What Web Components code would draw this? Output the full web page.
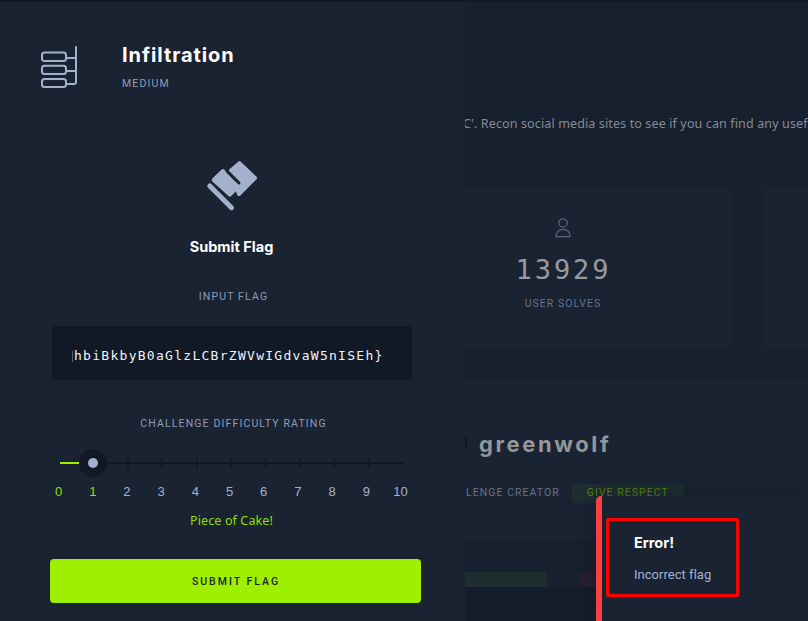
<!DOCTYPE html>
<html lang="en"><head><meta charset="utf-8"><title>Infiltration</title>
<style>
html,body{margin:0;width:808px;height:621px;overflow:hidden;background:#17202e}
body{position:relative;font-family:Inter,"Liberation Sans",sans-serif}
</style></head><body>
<challenge-page></challenge-page>
<flag-drawer></flag-drawer>
<error-toast><span slot="title">Error!</span><span slot="message">Incorrect flag</span></error-toast>
<script>
const define=(name,html,setup)=>customElements.define(name,class extends HTMLElement{
  constructor(){super();this.attachShadow({mode:'open'}).innerHTML=html;if(setup)setup(this.shadowRoot);}
});

define('stat-card',`<style>
:host{display:flex;flex-direction:column;align-items:center;box-sizing:border-box;height:160px;background:#1a2332;border-radius:4px;padding-top:30px}
svg{display:block;width:18px;height:20px}
.n{font:27px/34px "DejaVu Sans Mono",monospace;letter-spacing:2.9px;margin:15px 0 0 1px;color:#969b9f}
.l{font:10.5px/14px Roboto,sans-serif;letter-spacing:1.02px;margin-top:10px;color:#66728a}
</style>
<svg viewBox="0 0 18 21" fill="none" stroke="#59657b" stroke-width="1.3"><circle cx="9" cy="5.2" r="4.4"/><path d="M1.6 19.6C1.6 14.8 4.5 12 9 12s7.4 2.8 7.4 7.6z" stroke-linejoin="round"/></svg>
<div class="n"><slot name="value"></slot></div><div class="l"><slot name="label"></slot></div>`);

define('challenge-page',`<style>
:host{display:flex;flex-direction:column;width:808px;height:621px;overflow:hidden;box-sizing:border-box;border-top:2px solid #111927;background:#17202e}
.bar{height:59px;border-bottom:1px solid #1b2533;flex:none}
.desc{border-bottom:1px solid #1b2533;flex:none;padding:51px 0 0 463px;box-sizing:border-box;height:98px;white-space:nowrap;font:12.5px/22px "Noto Sans",sans-serif;letter-spacing:.13px;color:#858b93}
.stats{height:220px;flex:none;display:grid;grid-template-columns:336px 336px;gap:32px;padding:28px 0 0 395px;box-sizing:border-box}
.creator{flex:1;background:#1a2332;padding:47px 0 0 442px}
.who{display:flex;align-items:center;gap:12px;height:34px}
.av{width:25px;height:25px;margin-top:-6px;border-radius:50%;background:#0c131a}
.name{font:bold 22px/32px Inter,sans-serif;letter-spacing:2.6px;color:#92979c}
.role{display:flex;align-items:center;gap:12px;height:20px;margin:22px 0 0 24px;font:10.5px/14px Roboto,sans-serif;letter-spacing:1.05px;color:#66728a}
.role b{font-weight:400;display:flex;align-items:center;justify-content:center;width:112px;height:19px;border-radius:4px;background:#1e2d30;color:#578211}
.box{background:#17202e;margin:37px 0 0 -42px;height:90px;display:flex;flex-direction:column}
.tabs{display:flex;gap:32px;height:15px;padding-top:32px;flex:none}
.g{width:147px;background:#1e2d30;border-radius:4px 4px 0 0}
.r{width:147px;background:#271f30;border-radius:4px 4px 0 0}
.body{background:#141d2b;flex:1}
</style>
<div class="bar"></div>
<div class="desc">C'. Recon social media sites to see if you can find any usef</div>
<div class="stats"><stat-card><span slot="value">13929</span><span slot="label">USER SOLVES</span></stat-card><stat-card></stat-card></div>
<div class="creator"><div class="who"><i class="av"></i><span class="name">greenwolf</span></div>
<div class="role"><span>LENGE CREATOR</span><b>GIVE RESPECT</b></div>
<div class="box"><div class="tabs"><i class="g"></i><i class="r"></i></div><div class="body"></div></div></div>`,
root=>{const cards=root.querySelectorAll('stat-card');cards[1].shadowRoot.querySelector('svg').style.visibility='hidden';});

define('challenge-header',`<style>
:host{display:flex;height:111px;box-sizing:border-box;border-bottom:1px solid #1e2837;padding:43px 0 0 40px;gap:43px;flex:none}
svg{width:39px;height:44px;flex:none}
.t{font:bold 20px/24px Inter,sans-serif;letter-spacing:.92px;color:#fff;margin:-2px 0 0}
.d{font:10.5px/14px Roboto,sans-serif;letter-spacing:1.15px;color:#a4b1cd;margin-top:10px;opacity:.85}
</style>
<svg viewBox="0 0 39 44" fill="none" stroke="#a4b1cd" stroke-width="2"><rect x="2" y="7.5" width="24" height="8.5" rx="2.5"/><rect x="2" y="20.8" width="24" height="8.2" rx="2.5"/><rect x="2" y="34" width="24" height="8" rx="2.5"/><path d="M26 13h10M26 26h10M26 39h8q2 0 2-2V2" stroke-linecap="round"/></svg>
<div><div class="t"><slot name="title"></slot></div><div class="d"><slot name="level"></slot></div></div>`);

define('rating-slider',`<style>
:host{display:block;width:344px;height:54px;margin-left:60px}
.track{position:relative;display:flex;align-items:center;height:28px}
.rail{height:2px;width:344px;background:#111927}
.fill{position:absolute;left:0;top:13px;width:20px;height:2px;background:#9fef00}
.tick{position:absolute;top:9px;width:2px;height:10px;background:#111927}
.knob{position:absolute;left:19px;top:0;width:28px;height:28px;border-radius:50%;background:#111927;display:grid;place-items:center}
.knob i{width:10px;height:10px;border-radius:50%;background:#a4b1cd}
.nums{display:grid;grid-template-columns:repeat(11,34.2px);margin:7px 0 0 -18.5px;font:13px/16px "Liberation Sans",sans-serif;color:#a4b1cd;text-align:center}
.on{color:#9fef00;opacity:.9}
</style><div class="track"><div class="rail"></div><div class="fill"></div><div class="knob"><i></i></div></div><div class="nums"></div>`,
root=>{
  const track=root.querySelector('.track'),nums=root.querySelector('.nums');
  for(let i=0;i<=10;i++){
    const n=document.createElement('span');n.textContent=i;if(i<2)n.className='on';nums.append(n);
    if(i>1&&i<10){const t=document.createElement('i');t.className='tick';t.style.left=Math.round(-1.8+i*34.4)+'px';track.append(t);}
  }
});

define('flag-drawer',`<style>
:host{position:absolute;left:0;top:2px;width:465px;height:619px;display:flex;flex-direction:column;background:#1a2332;overflow:hidden}
.icon{display:block;width:52px;height:52px;margin:47px 0 0 206px;flex:none}
.c{width:463px;text-align:center;flex:none}
h2{font:bold 14.5px/20px Inter,sans-serif;margin:25px 0 0;color:#fff;letter-spacing:0}
.l{font:10.5px/14px Roboto,sans-serif;letter-spacing:1.15px;color:#a4b1cd;opacity:.85}
.field{height:54px;width:360px;margin:22px 0 0 52px;background:#111927;border-radius:4px;box-sizing:border-box;padding:6px 20px 0;display:flex;align-items:center;flex:none}
.clip{overflow:hidden;width:320px;white-space:nowrap;display:flex;align-items:center;font:13px/22px "DejaVu Sans Mono",monospace;letter-spacing:1.28px;color:#f0f2f4}
.clip i{width:1px;height:11px;background:#5a626f;margin-right:1px;flex:none}
.hint{font:12.5px/18px "Noto Sans",sans-serif;letter-spacing:.12px;color:#9fef00;opacity:.9;margin-top:9px}
button{display:block;width:371px;height:44px;margin:29px 0 0 50px;padding:1px 0 0 1px;border:0;border-radius:4px;background:#9fef00;color:#1a2332;font:500 10.5px/14px Roboto,sans-serif;letter-spacing:2px;flex:none}
</style>
<challenge-header><span slot="title">Infiltration</span><span slot="level">MEDIUM</span></challenge-header>
<svg class="icon" viewBox="0 0 52 52" fill="#a4b1cd" stroke="#a4b1cd" stroke-linejoin="round" stroke-linecap="round"><path d="M3.8 26L25.5 47.7" stroke-width="5"/><path d="M7.7 20L17 11L27 22Q30 24.5 33 22L33 25.5L23.8 34.5Z" stroke-width="4"/><path d="M25 10.5L33.5 3.2L49 18L33 34L31 28L34 22Z" stroke-width="4"/><path d="M21 11L33 23" stroke="#1a2332" stroke-width="3"/></svg>
<h2 class="c">Submit Flag</h2>
<div class="c l" style="margin:33px 0 0 2px">INPUT FLAG</div>
<div class="field"><div class="clip"><i></i>hbiBkbyB0aGlzLCBrZWVwIGdvaW5nISEh}</div></div>
<div class="c l" style="margin:37px 0 18px 2px">CHALLENGE DIFFICULTY RATING</div>
<rating-slider></rating-slider>
<div class="c hint">Piece of Cake!</div>
<button>SUBMIT FLAG</button>`);

define('error-toast',`<style>
:host{position:absolute;left:596px;top:496px;width:212px;height:125px;box-sizing:border-box;background:#1a2332;border-left:6px solid #ff3e3e;border-top-left-radius:5px;padding:22px 0 0 4px;box-shadow:0 0 16px #0d152466}
.mark{box-sizing:border-box;width:133px;height:79px;border:3px solid #f00;border-radius:2px;padding:12px 0 0 25px}
.t{font:bold 14.5px/20px Inter,sans-serif;color:#fff}
.m{font:13px/18px Roboto,sans-serif;letter-spacing:.03px;color:#a4b1cd;margin-top:13px}
</style><div class="mark"><div class="t"><slot name="title"></slot></div><div class="m"><slot name="message"></slot></div></div>`);
</script></body></html>
